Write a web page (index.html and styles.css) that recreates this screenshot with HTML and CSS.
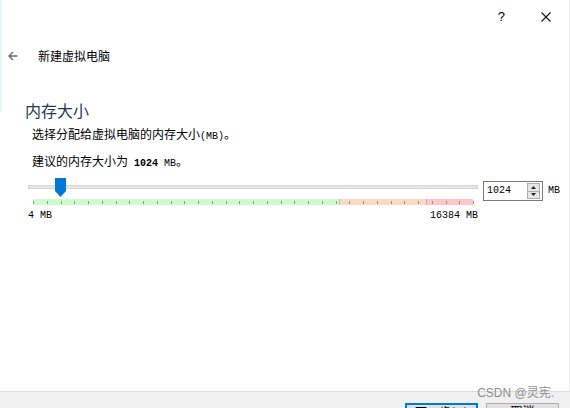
FILE: index.html
```html
<!DOCTYPE html>
<html lang="zh-CN">
<head>
<meta charset="utf-8">
<title>新建虚拟电脑</title>
<link rel="stylesheet" href="styles.css">
</head>
<body>
<div class="window">
  <div class="titlebar">
    <span class="help">?</span>
    <svg class="close" width="10" height="10" viewBox="0 0 10 10" aria-hidden="true">
      <path d="M0.5 0.5 L9.5 9.5 M9.5 0.5 L0.5 9.5" stroke="#111" stroke-width="1.1" fill="none"/>
    </svg>
  </div>

  <div class="nav">
    <svg class="back" width="10" height="10" viewBox="0 0 10 10" aria-hidden="true">
      <path d="M9.5 5 H1 M5 1 L1 5 L5 9" stroke="#6b6b6b" stroke-width="1.4" fill="none"/>
    </svg>
    <span class="nav-title">新建虚拟电脑</span>
  </div>

  <main class="page">
    <h1 class="heading">内存大小</h1>
    <p class="text">选择分配给虚拟电脑的内存大小<span class="lat">(MB)</span>。</p>
    <p class="text">建议的内存大小为<span class="lat"> <b>1024</b> MB</span>。</p>

    <div class="memory">
      <div class="slider">
        <div class="track-area">
          <div class="track"></div>
          <div class="thumb"></div>
        </div>
        <div class="scale">
          <div class="zone zone-ok" style="width:69.5%"></div>
          <div class="zone zone-warn" style="width:19.8%"></div>
          <div class="zone zone-bad" style="width:10.7%"></div>
          <div class="ticks">
            <i></i><i></i><i></i><i></i><i></i><i></i><i></i><i></i><i></i><i></i><i></i>
            <i></i><i></i><i></i><i></i><i></i><i></i><i></i><i></i><i></i><i></i><i></i>
            <i></i><i></i><i></i><i></i><i></i><i></i><i></i><i></i><i></i><i></i><i></i>
          </div>
        </div>
        <div class="limits">
          <span>4 MB</span>
          <span>16384 MB</span>
        </div>
      </div>

      <div class="spin">
        <span class="spin-value">1024</span>
        <span class="spin-btns">
          <span class="spin-btn"><svg width="5" height="3" viewBox="0 0 5 3"><path d="M0 3 L2.5 0 L5 3 Z" fill="#222"/></svg></span>
          <span class="spin-btn"><svg width="5" height="3" viewBox="0 0 5 3"><path d="M0 0 L2.5 3 L5 0 Z" fill="#222"/></svg></span>
        </span>
      </div>
      <span class="unit">MB</span>
    </div>
  </main>

  <footer class="buttons">
    <button class="btn btn-default">下一步(N)</button>
    <button class="btn">取消</button>
  </footer>

  <div class="watermark">CSDN @灵宪.</div>
</div>
</body>
</html>
```

FILE: styles.css
```css
* {
  box-sizing: border-box;
}

html,
body {
  margin: 0;
  padding: 0;
  background: #fff;
}

body {
  font-family: "Noto Sans CJK SC", "Liberation Sans", sans-serif;
  font-size: 12px;
  color: #000;
}

.window {
  position: relative;
  width: 570px;
  height: 408px;
  display: flex;
  flex-direction: column;
  overflow: hidden;
  background:
    linear-gradient(#e3f6fc, #e3f6fc) 0 0 / 2px 112px no-repeat,
    linear-gradient(#ececec, #ececec) 569px 0 / 1px 100% no-repeat,
    #fff;
}

/* caption buttons */
.titlebar {
  height: 34px;
  display: flex;
  justify-content: flex-end;
  align-items: center;
  padding-right: 19px;
}

.help {
  font-family: "Liberation Sans", sans-serif;
  font-size: 13px;
  line-height: 14px;
  margin-right: 36px;
}

.close {
  display: block;
}

/* back arrow + wizard name */
.nav {
  margin-top: 10px;
  height: 24px;
  display: flex;
  align-items: center;
  padding-left: 8px;
}

.back {
  display: block;
}

.nav-title {
  margin-left: 20px;
  line-height: 24px;
}

.page {
  flex: 1;
}

.heading {
  margin: 32px 0 0 25px;
  font-size: 16px;
  line-height: 20px;
  font-weight: normal;
  color: #1c3a5e;
}

.text {
  margin: 6px 0 0 32px;
  height: 16px;
  line-height: 16px;
}

.text + .text {
  margin-top: 11px;
}

.lat {
  font-family: "Liberation Mono", monospace;
  font-size: 10px;
  line-height: 10px;
}

.lat b {
  font-weight: bold;
}

/* memory slider row */
.memory {
  margin: 9px 0 0 28px;
  display: flex;
  align-items: flex-start;
}

.slider {
  width: 450px;
}

.track-area {
  position: relative;
  height: 20px;
}

.track {
  position: relative;
  top: 7px;
  height: 4px;
  background: #e7e7e7;
  border: 1px solid #d5d5d5;
}

.thumb {
  position: absolute;
  left: 27px;
  top: 0;
  width: 11px;
  height: 19px;
  background: #0078d7;
  clip-path: polygon(0 0, 100% 0, 100% 68%, 50% 100%, 0 68%);
}

.scale {
  position: relative;
  margin: 1px 5px 0;
  height: 6px;
  display: flex;
}

.zone {
  height: 100%;
}

.zone-ok {
  background: #cdfbcc;
}

.zone-warn {
  background: #fed9c4;
  border-left: 1px solid #c9b7a8;
}

.zone-bad {
  background: #fec7ca;
  border-left: 1px solid #d1a6a6;
}

.ticks {
  position: absolute;
  left: 0;
  right: -1px;
  top: 0;
  bottom: 0;
  display: flex;
  justify-content: space-between;
  align-items: center;
}

.ticks i {
  display: block;
  width: 1px;
  height: 3px;
  background: #8f9a8f;
}

.limits {
  margin-top: 4px;
  display: flex;
  justify-content: space-between;
  font-family: "Liberation Mono", monospace;
  font-size: 10px;
  line-height: 14px;
}

/* number spin box */
.spin {
  margin: 3px 0 0 5px;
  width: 60px;
  height: 20px;
  border: 1px solid #7a7a7a;
  display: flex;
  align-items: center;
  justify-content: space-between;
  padding: 0 2px 0 3px;
  background: #fff;
}

.spin-value {
  font-family: "Liberation Mono", monospace;
  font-size: 10px;
  line-height: 18px;
}

.spin-btns {
  width: 13px;
  height: 16px;
  border: 1px solid #adadad;
  background: #e6e6e6;
  display: flex;
  flex-direction: column;
}

.spin-btn {
  flex: 1;
  display: flex;
  align-items: center;
  justify-content: center;
}

.spin-btn + .spin-btn {
  border-top: 1px solid #adadad;
}

.spin-btn svg {
  display: block;
}

.unit {
  margin: 3px 0 0 5px;
  font-family: "Liberation Mono", monospace;
  font-size: 10px;
  line-height: 20px;
}

/* dialog buttons */
.buttons {
  height: 17px;
  border-top: 1px solid #dcdcdc;
  background: #f0f0f0;
  display: flex;
  justify-content: flex-end;
  align-items: flex-start;
  gap: 8px;
  padding: 11px 11px 0 0;
  overflow: hidden;
}

.btn {
  flex: none;
  width: 73px;
  height: 23px;
  margin: 0;
  padding: 0;
  border: 1px solid #adadad;
  background: #e1e1e1;
  font-family: "Noto Sans CJK SC", sans-serif;
  font-size: 12px;
  line-height: 14px;
  color: #000;
  display: flex;
  justify-content: center;
  align-items: flex-start;
}

.btn-default {
  border: 2px solid #0078d7;
}

.watermark {
  position: absolute;
  right: 16px;
  bottom: 8px;
  font-family: "Liberation Sans", "Noto Sans CJK SC", sans-serif;
  font-size: 12px;
  line-height: 14px;
  color: rgba(120, 120, 120, 0.85);
}
```
